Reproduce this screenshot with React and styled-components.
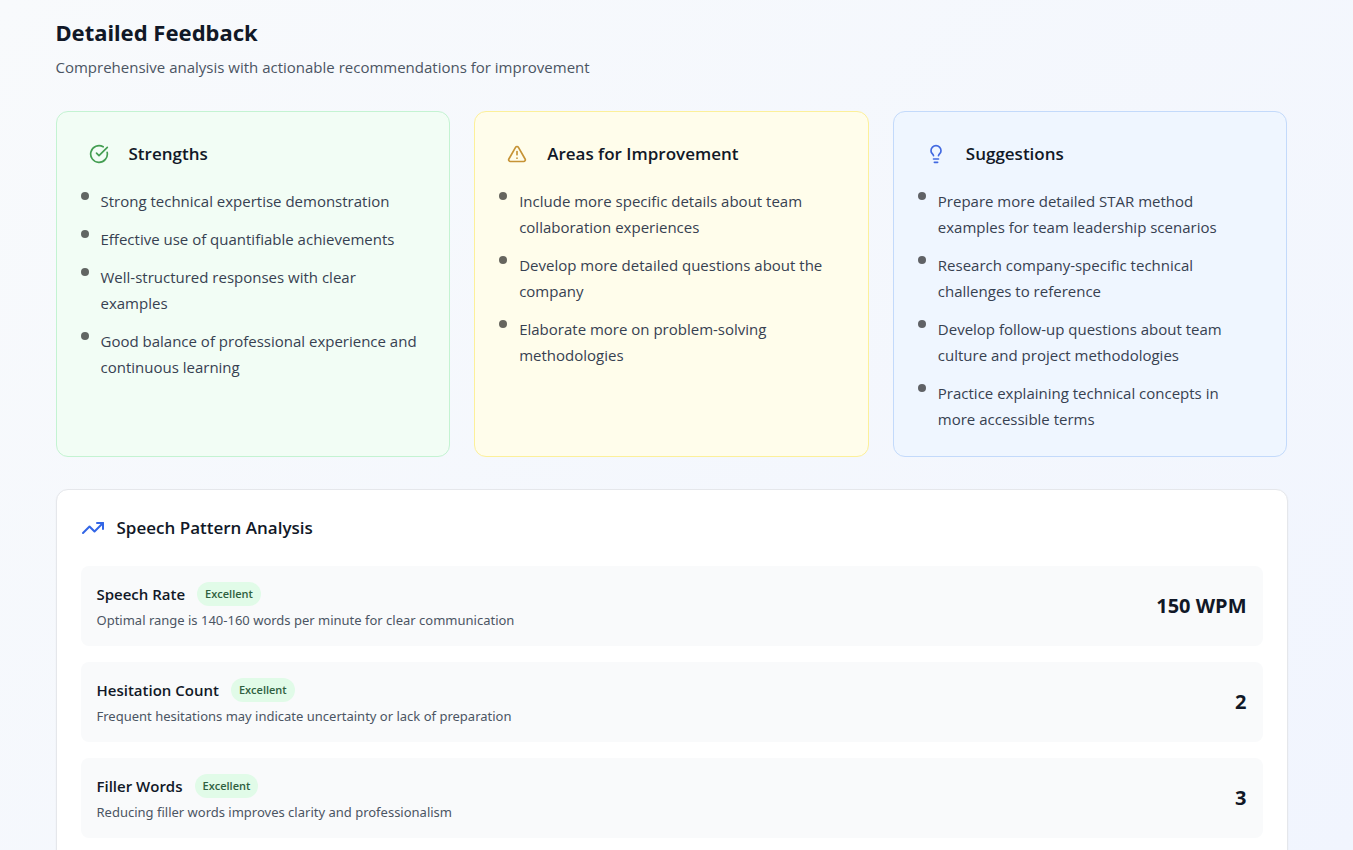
import React from "react";
import styled, { createGlobalStyle } from "styled-components";
import { CircleCheckBig, TriangleAlert, Lightbulb, TrendingUp } from "lucide-react";

const GlobalStyle = createGlobalStyle`
  *, *::before, *::after { box-sizing: border-box; }
  body {
    margin: 0;
    font-family: "Open Sans", "Noto Sans", sans-serif;
    font-size: 15px;
    line-height: 24px;
    color: #111827;
  }
  h2, h3, h4, p, ul { margin: 0; padding: 0; }
`;

const Page = styled.main`
  height: 100vh;
  overflow-x: hidden;
  overflow-y: auto;
  scrollbar-width: none;
  padding: 16px 34px 0 24px;
  background: linear-gradient(135deg, #f8fafc, #f1f5fe);
`;

const Container = styled.section`
  max-width: 1280px;
  margin: 0 auto;
  padding: 0 24px 24px;
`;

const Header = styled.header`
  display: grid;
  gap: 7px;
  margin-bottom: 32px;
`;

const Title = styled.h2`
  font-family: "Noto Sans", sans-serif;
  font-size: 22px;
  font-weight: 700;
  line-height: 32px;
`;

const Subtitle = styled.p`
  color: #4b5563;
`;

const CardGrid = styled.div`
  display: grid;
  grid-template-columns: repeat(3, minmax(0, 1fr));
  gap: 24px;
  margin-bottom: 32px;
`;

const Card = styled.article`
  padding: 24px;
  border: 1px solid ${(p) => p.$border};
  border-radius: 12px;
  background: ${(p) => p.$bg};
`;

const CardHeader = styled.div`
  display: flex;
  align-items: center;
  gap: 12px;
  margin-bottom: 16px;
`;

const IconBox = styled.span`
  display: flex;
  padding: 8px;
  color: ${(p) => p.$color};
`;

const Heading = styled.h3`
  font-size: 17px;
  font-weight: 600;
  line-height: 28px;
`;

const List = styled.ul`
  display: grid;
  gap: 12px;
  list-style: none;
`;

const Item = styled.li`
  display: flex;
  gap: 12px;
  padding-right: 4px;
  line-height: 26px;
  color: #374151;

  &::before {
    content: "";
    flex: none;
    width: 8px;
    height: 8px;
    margin-top: 4px;
    border-radius: 50%;
    background: #000000;
    opacity: 0.6;
  }
`;

const Panel = styled.section`
  padding: 24px;
  border: 1px solid #e5e7eb;
  border-radius: 12px;
  background: #ffffff;
  box-shadow: 0 1px 2px rgba(0, 0, 0, 0.05);
`;

const PanelHeader = styled.div`
  display: flex;
  align-items: center;
  gap: 12px;
  margin-bottom: 24px;

  svg { color: #3366e6; }
`;

const Metrics = styled.div`
  display: grid;
  gap: 16px;
`;

const Metric = styled.div`
  display: flex;
  align-items: center;
  justify-content: space-between;
  padding: 16px;
  border-radius: 8px;
  background: #f9fafb;
`;

const MetricHead = styled.div`
  display: flex;
  align-items: center;
  gap: 12px;
  margin-bottom: 4px;
`;

const MetricName = styled.h4`
  font-size: 15px;
  font-weight: 600;
  line-height: 24px;
`;

const Badge = styled.span`
  padding: 4px 8px;
  border-radius: 12px;
  background: #e1fbe8;
  color: #2f6040;
  font-size: 11px;
  font-weight: 600;
  line-height: 16px;
`;

const MetricNote = styled.p`
  font-family: "Noto Sans", sans-serif;
  font-size: 13px;
  line-height: 20px;
  color: #4b5563;
`;

const MetricValue = styled.strong`
  font-size: 20px;
  font-weight: 700;
  line-height: 28px;
`;

const cards = [
  {
    title: "Strengths",
    icon: CircleCheckBig,
    color: "#449e52",
    bg: "#f2fdf5",
    border: "#c4f3d2",
    items: [
      "Strong technical expertise demonstration",
      "Effective use of quantifiable achievements",
      "Well-structured responses with clear examples",
      "Good balance of professional experience and continuous learning",
    ],
  },
  {
    title: "Areas for Improvement",
    icon: TriangleAlert,
    color: "#c69335",
    bg: "#fffdeb",
    border: "#fcf09a",
    items: [
      "Include more specific details about team collaboration experiences",
      "Develop more detailed questions about the company",
      "Elaborate more on problem-solving methodologies",
    ],
  },
  {
    title: "Suggestions",
    icon: Lightbulb,
    color: "#4169e1",
    bg: "#eff6ff",
    border: "#c3dafb",
    items: [
      "Prepare more detailed STAR method examples for team leadership scenarios",
      "Research company-specific technical challenges to reference",
      "Develop follow-up questions about team culture and project methodologies",
      "Practice explaining technical concepts in more accessible terms",
    ],
  },
];

const metrics = [
  {
    name: "Speech Rate",
    rating: "Excellent",
    note: "Optimal range is 140-160 words per minute for clear communication",
    value: "150 WPM",
  },
  {
    name: "Hesitation Count",
    rating: "Excellent",
    note: "Frequent hesitations may indicate uncertainty or lack of preparation",
    value: "2",
  },
  {
    name: "Filler Words",
    rating: "Excellent",
    note: "Reducing filler words improves clarity and professionalism",
    value: "3",
  },
];

export default function App() {
  return (
    <Page>
      <GlobalStyle />
      <Container>
        <Header>
          <Title>Detailed Feedback</Title>
          <Subtitle>Comprehensive analysis with actionable recommendations for improvement</Subtitle>
        </Header>
        <CardGrid>
          {cards.map(({ title, icon: Icon, color, bg, border, items }) => (
            <Card key={title} $bg={bg} $border={border}>
              <CardHeader>
                <IconBox $color={color}>
                  <Icon size={20} aria-hidden="true" />
                </IconBox>
                <Heading>{title}</Heading>
              </CardHeader>
              <List>
                {items.map((item) => (
                  <Item key={item}>{item}</Item>
                ))}
              </List>
            </Card>
          ))}
        </CardGrid>
        <Panel>
          <PanelHeader>
            <TrendingUp size={24} aria-hidden="true" />
            <Heading>Speech Pattern Analysis</Heading>
          </PanelHeader>
          <Metrics>
            {metrics.map((m) => (
              <Metric key={m.name}>
                <div>
                  <MetricHead>
                    <MetricName>{m.name}</MetricName>
                    <Badge>{m.rating}</Badge>
                  </MetricHead>
                  <MetricNote>{m.note}</MetricNote>
                </div>
                <MetricValue>{m.value}</MetricValue>
              </Metric>
            ))}
          </Metrics>
        </Panel>
      </Container>
    </Page>
  );
}
